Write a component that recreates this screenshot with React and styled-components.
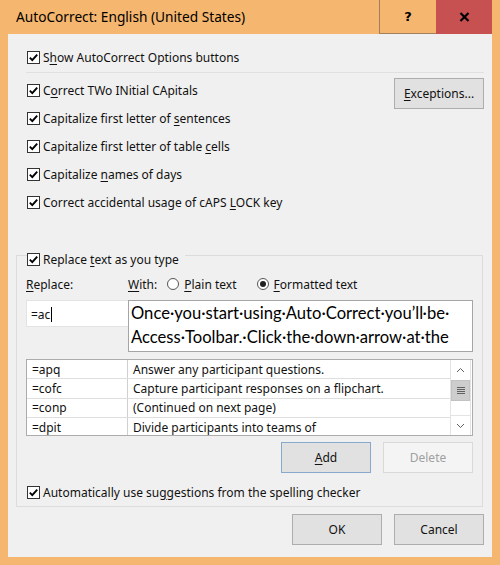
import React from "react";
import styled, { createGlobalStyle } from "styled-components";

const GlobalStyle = createGlobalStyle`
  html, body {
    margin: 0;
    padding: 0;
  }
  body {
    font-family: "Noto Sans", "Open Sans", sans-serif;
    font-size: 12px;
    color: #111;
  }
  * {
    box-sizing: border-box;
  }
`;

const rows = [
  { name: "=apq", value: "Answer any participant questions." },
  { name: "=cofc", value: "Capture participant responses on a flipchart." },
  { name: "=conp", value: "(Continued on next page)" },
  { name: "=dpit", value: "Divide participants into teams of" },
];

const Check = ({ checked = true }) => (
  <CheckBox>
    {checked && (
      <svg width="11" height="11" viewBox="0 0 11 11">
        <path d="M1.8 5.6 L4.3 8.1 L9.2 2.6" fill="none" stroke="#000" strokeWidth="1.9" />
      </svg>
    )}
  </CheckBox>
);

const Option = ({ children }) => (
  <OptionRow>
    <Check />
    <span>{children}</span>
  </OptionRow>
);

const App = () => {
  return (
    <>
      <GlobalStyle />
      <Window>
        <TitleBar>
          <Title>AutoCorrect: English (United States)</Title>
          <CaptionButton>?</CaptionButton>
          <CaptionButton $close>
            <svg width="11" height="10" viewBox="0 0 11 10">
              <path d="M1.5 1 L9.5 9 M9.5 1 L1.5 9" stroke="#000" strokeWidth="2.2" />
            </svg>
          </CaptionButton>
        </TitleBar>

        <Client>
          <TopOption>
            <Option>
              S<Key>h</Key>ow AutoCorrect Options buttons
            </Option>
          </TopOption>
          <Separator />

          <OptionsBlock>
            <OptionList>
              <Option>
                C<Key>o</Key>rrect TWo INitial CApitals
              </Option>
              <Option>
                Capitalize first letter of <Key>s</Key>entences
              </Option>
              <Option>
                Capitalize first letter of table <Key>c</Key>ells
              </Option>
              <Option>
                Capitalize <Key>n</Key>ames of days
              </Option>
              <Option>
                Correct accidental usage of cAPS <Key>L</Key>OCK key
              </Option>
            </OptionList>
            <Button $top={2}>
              <Key>E</Key>xceptions...
            </Button>
          </OptionsBlock>

          <Group>
            <Legend>
              <Check />
              <span>
                Replace <Key>t</Key>ext as you type
              </span>
            </Legend>

            <LabelRow>
              <ReplaceLabel>
                <Key>R</Key>eplace:
              </ReplaceLabel>
              <span>
                <Key>W</Key>ith:
              </span>
              <RadioOption $gap={10}>
                <Radio />
                <span>
                  <Key>P</Key>lain text
                </span>
              </RadioOption>
              <RadioOption $gap={20}>
                <Radio $checked />
                <span>
                  <Key>F</Key>ormatted text
                </span>
              </RadioOption>
            </LabelRow>

            <InputRow>
              <ReplaceInput>
                =ac
                <Caret />
              </ReplaceInput>
              <WithBox>
                <WithLine>Once·you·start·using·Auto·Correct·you’ll·be·</WithLine>
                <WithLine>Access·Toolbar.·Click·the·down·arrow·at·the</WithLine>
              </WithBox>
            </InputRow>

            <ListBox>
              <ListRows>
                {rows.map((row) => (
                  <ListRow key={row.name}>
                    <NameCell>{row.name}</NameCell>
                    <ValueCell>{row.value}</ValueCell>
                  </ListRow>
                ))}
              </ListRows>
              <ScrollBar>
                <ArrowButton>
                  <svg width="9" height="6" viewBox="0 0 9 6">
                    <path d="M1 5 L4.5 1.5 L8 5" fill="none" stroke="#606060" strokeWidth="1" />
                  </svg>
                </ArrowButton>
                <Thumb>
                  <Grip />
                  <Grip />
                  <Grip />
                  <Grip />
                </Thumb>
                <Track />
                <ArrowButton $bottom>
                  <svg width="9" height="6" viewBox="0 0 9 6">
                    <path d="M1 1 L4.5 4.5 L8 1" fill="none" stroke="#606060" strokeWidth="1" />
                  </svg>
                </ArrowButton>
              </ScrollBar>
            </ListBox>

            <ButtonRow $top={6}>
              <Button $default>
                <Key>A</Key>dd
              </Button>
              <Button disabled>Delete</Button>
            </ButtonRow>

            <BottomOption>
              <Check />
              <span>
                Automatically use su<Key>g</Key>gestions from the spelling checker
              </span>
            </BottomOption>
          </Group>

          <DialogButtons>
            <Button>OK</Button>
            <Button>Cancel</Button>
          </DialogButtons>
        </Client>
      </Window>
    </>
  );
};

// Styled Components
const Window = styled.div`
  width: 500px;
  height: 565px;
  background: #f5b66f;
  padding: 0 8px 8px 8px;
  display: flex;
  flex-direction: column;
`;

const TitleBar = styled.div`
  height: 34px;
  display: flex;
  align-items: stretch;
`;

const Title = styled.div`
  flex: 1;
  display: flex;
  align-items: center;
  padding-left: 8px;
  padding-bottom: 1px;
  font-size: 13.7px;
  color: #000;
`;

const CaptionButton = styled.div`
  width: ${({ $close }) => ($close ? "56px" : "57px")};
  display: flex;
  align-items: center;
  justify-content: center;
  background: ${({ $close }) => ($close ? "#c75050" : "transparent")};
  border-left: ${({ $close }) => ($close ? "none" : "1px solid #a2805c")};
  border-bottom: ${({ $close }) => ($close ? "none" : "1px solid #a2805c")};
  font-family: "DejaVu Sans", sans-serif;
  font-weight: bold;
  font-size: 13px;
  color: #000;
`;

const Client = styled.div`
  flex: 1;
  background: #f0f0f0;
  padding: 0 8px;
  display: flex;
  flex-direction: column;
`;

const OptionRow = styled.div`
  height: 28px;
  display: flex;
  align-items: center;
  gap: 3px;
  white-space: nowrap;
`;

const TopOption = styled.div`
  margin-top: 9px;
  padding-left: 11px;
`;

const Separator = styled.div`
  height: 1px;
  margin: 1px 0 0 10px;
  background: #e0e0e0;
`;

const OptionsBlock = styled.div`
  margin-top: 3px;
  padding-left: 11px;
  display: flex;
  justify-content: space-between;
  align-items: flex-start;
`;

const OptionList = styled.div`
  display: flex;
  flex-direction: column;
`;

const CheckBox = styled.span`
  width: 13px;
  height: 13px;
  flex: none;
  border: 1px solid #333;
  background: #fff;
  display: inline-flex;
  align-items: center;
  justify-content: center;
`;

const Key = styled.span`
  text-decoration: underline;
  text-decoration-thickness: 1px;
  text-underline-offset: 2px;
`;

const Button = styled.button`
  width: 90px;
  height: 31px;
  margin-top: ${({ $top }) => ($top ? `${$top}px` : "0")};
  flex: none;
  font-family: inherit;
  font-size: 12px;
  color: ${({ disabled }) => (disabled ? "#a0a0a0" : "#111")};
  background: ${({ disabled }) => (disabled ? "#f4f4f4" : "#e1e1e1")};
  border: 1px solid
    ${({ disabled, $default }) =>
      disabled ? "#d9d9d9" : $default ? "#88a9cc" : "#adadad"};
  padding: 0;
`;

const Group = styled.fieldset`
  margin: 27px 1px 0 0;
  padding: 0 9px 4px 9px;
  border: 1px solid #dcdcdc;
  min-width: 0;
`;

const Legend = styled.legend`
  margin-left: 1px;
  padding: 8px 6px 0 0;
  display: flex;
  align-items: center;
  gap: 3px;
  height: 24px;
`;

const LabelRow = styled.div`
  margin-top: 7px;
  height: 20px;
  display: flex;
  align-items: center;
  white-space: nowrap;
`;

const ReplaceLabel = styled.span`
  width: 102px;
  flex: none;
`;

const RadioOption = styled.span`
  display: inline-flex;
  align-items: center;
  gap: 5px;
  margin-left: ${({ $gap }) => $gap}px;
`;

const Radio = styled.span`
  width: 12px;
  height: 12px;
  border-radius: 50%;
  border: 1px solid #555;
  background: #fff;
  display: inline-flex;
  align-items: center;
  justify-content: center;

  &::after {
    content: "";
    width: 6px;
    height: 6px;
    border-radius: 50%;
    background: ${({ $checked }) => ($checked ? "#222" : "transparent")};
  }
`;

const InputRow = styled.div`
  margin-top: 6px;
  display: flex;
  align-items: flex-start;
`;

const ReplaceInput = styled.div`
  width: 102px;
  height: 27px;
  flex: none;
  background: #fff;
  border: 1px solid #e3e3e3;
  border-right: none;
  display: flex;
  align-items: center;
  padding-left: 4px;
  padding-top: 1px;
`;

const Caret = styled.span`
  width: 1px;
  height: 15px;
  background: #000;
  margin-left: 1px;
`;

const WithBox = styled.div`
  flex: 1;
  height: 52px;
  background: #fff;
  border: 1px solid #a5a5a5;
  padding: 0 0 0 2px;
  overflow: hidden;
  font-family: "Lato", "Noto Sans", sans-serif;
  font-size: 16.6px;
  color: #000;
`;

const WithLine = styled.div`
  height: 24px;
  line-height: 24px;
  white-space: nowrap;
`;

const ListBox = styled.div`
  margin-top: 7px;
  height: 77px;
  border: 1px solid #acacac;
  background: #fff;
  display: flex;
  overflow: hidden;
`;

const ListRows = styled.div`
  flex: 1;
  display: flex;
  flex-direction: column;
`;

const ListRow = styled.div`
  height: 19.4px;
  flex: none;
  display: flex;
  border-bottom: 1px solid #dedede;
  white-space: nowrap;
`;

const NameCell = styled.div`
  width: 101px;
  flex: none;
  border-right: 1px solid #d0d0d0;
  padding-left: 5px;
  display: flex;
  align-items: center;
`;

const ValueCell = styled.div`
  flex: 1;
  padding-left: 5px;
  display: flex;
  align-items: center;
`;

const ScrollBar = styled.div`
  width: 21px;
  margin-right: 1px;
  flex: none;
  display: flex;
  flex-direction: column;
  border-left: 1px solid #e3e3e3;
  border-right: 1px solid #e3e3e3;
`;

const ArrowButton = styled.div`
  height: 20px;
  flex: none;
  display: flex;
  align-items: center;
  justify-content: center;
  border-top: ${({ $bottom }) => ($bottom ? "1px solid #e3e3e3" : "none")};
`;

const Thumb = styled.div`
  height: 21px;
  flex: none;
  background: #cdcdcd;
  border: 1px solid #c2c2c2;
  display: flex;
  flex-direction: column;
  align-items: center;
  justify-content: center;
  gap: 1px;
`;

const Grip = styled.span`
  width: 8px;
  height: 1px;
  background: #606060;
`;

const Track = styled.div`
  flex: 1;
`;

const ButtonRow = styled.div`
  margin-top: ${({ $top }) => $top}px;
  display: flex;
  justify-content: flex-end;
  gap: 12px;
`;

const BottomOption = styled.div`
  margin-top: 9px;
  height: 20px;
  padding-left: 1px;
  display: flex;
  align-items: center;
  gap: 3px;
  white-space: nowrap;
`;

const DialogButtons = styled.div`
  margin-top: 7px;
  display: flex;
  justify-content: flex-end;
  gap: 12px;
`;

export default App;
